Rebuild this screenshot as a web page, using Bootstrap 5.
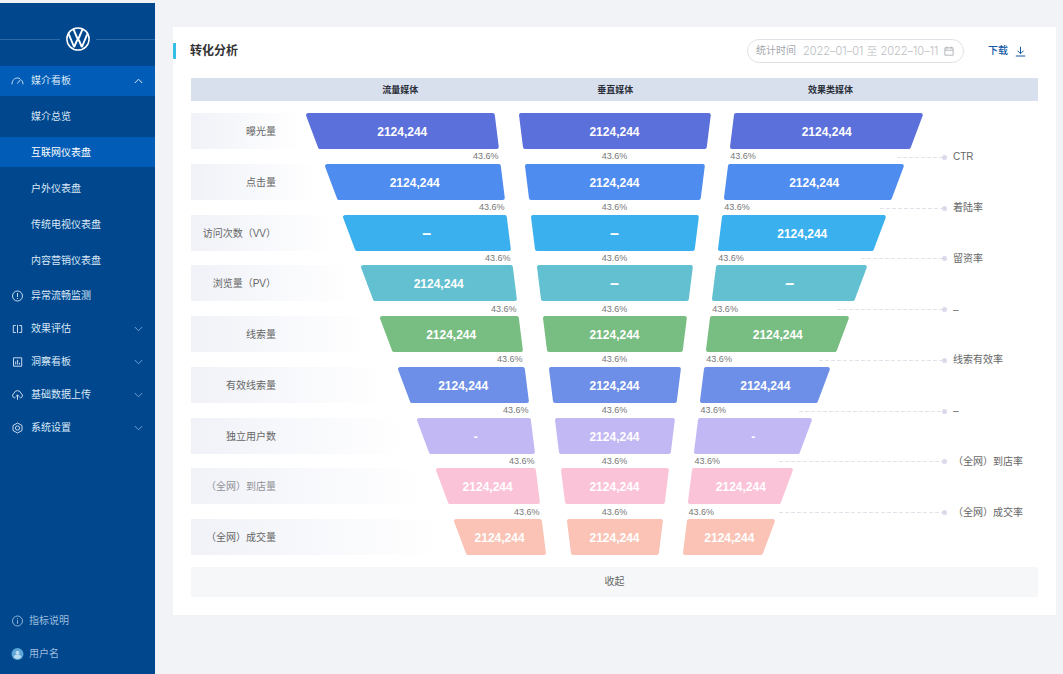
<!DOCTYPE html>
<html lang="zh-CN">
<head>
<meta charset="utf-8">
<meta name="viewport" content="width=device-width, initial-scale=1">
<title>转化分析</title>
<link href="https://cdn.jsdelivr.net/npm/bootstrap@5.3.0/dist/css/bootstrap.min.css" rel="stylesheet">
<style>
  body { font-family: "Liberation Sans", "Noto Sans CJK SC", sans-serif; font-size: 10px; line-height: 14px; background: #f1f3f6; color: #666; }
  svg { display: block; flex: none; }
  .app { min-height: 100vh; padding-top: 3px; }

  /* sidebar */
  .side { width: 155px; flex: none; background: #00478e; color: #dbe9f7; }
  .brand { height: 63px; padding-top: 9px; gap: 6px; }
  .brand i { flex: 1; height: 1px; background: #2c68a6; }
  .item { height: 33px; padding: 0 12px 0 11px; gap: 7px; color: inherit; background: none; border: 0; text-decoration: none; text-align: left; width: 100%; }
  .item.open { height: 30px; background: #005cb6; }
  .item span { flex: 1; }
  .item .chev { color: #6f9fd0; }
  .item.open .chev { color: #dbe9f7; }
  .subnav { padding: 2px 0 1px; }
  .subnav a { display: block; margin: 3px 0; padding: 9px 0 7px 31px; color: inherit; text-decoration: none; }
  .subnav li { display: flow-root; }
  .subnav a.active { background: #005cb6; color: #fff; }
  .foot { color: #9dbddd; padding-bottom: 4px; }
  .foot .item { gap: 5px; }

  /* panel */
  .page { padding: 24px 7px 24px 18px; }
  .panel { background: #fff; padding: 12px 18px 18px; }
  .headline { margin: 0 0 15px -18px; }
  .headline h1 { font-size: 12px; line-height: 16px; font-weight: 700; color: #333; margin: 0; padding-left: 14px; border-left: 3px solid #35bfe6; border-radius: 1px; }
  .range { width: 217px; height: 24px; border: 1px solid #dfe3e8; border-radius: 12px; padding: 0 9px 0 8px; color: #a3a6ab; }
  .range label { flex: none; margin-right: 7px; }
  .range input { flex: 1; min-width: 0; border: 0; padding: 0; background: none; color: #b9bcc1; font: 300 11px/14px Inter, "Noto Sans CJK SC", sans-serif; outline: 0; }
  .download { border: 0; background: none; padding: 0; gap: 7px; color: #1459a4; font-weight: 500; margin: 0 12px 0 24px; }
  .media { background: #d8dfed; height: 23px; font-size: 9px; font-weight: 700; color: #2b2f3a; margin-bottom: 12px; }
  .media .edge { width: 12%; }
  .media .chan { width: 25.4%; text-align: center; }

  /* funnel */
  .funnel { height: 442px; }
  .step { height: 36px; flex: none; }
  .step-name { background: linear-gradient(90deg, #f0f2f8, #fff 95%); flex: none; padding-top: 2px; }
  .step-name span { display: block; width: 85px; text-align: right; white-space: nowrap; }
  .muted .step-name { color: #8f9196; }
  .slab { position: relative; flex: none; }
  .slab svg { width: 100%; height: 36px; overflow: visible; }
  .slab b { position: absolute; inset: 2px 0 0; display: flex; align-items: center; justify-content: center; color: #fff; font-size: 12px; }
  .slab b.dash { font-size: 16px; }
  .rates { flex: 1 1 0; min-height: 0; font-size: 9px; line-height: 12px; color: #777; }
  .rates > div { flex: none; }
  .rates .legend-row { flex: 1; font-size: 10px; color: #666; padding-top: 2px; }
  .legend-row i { flex: 1; height: 1px; background: repeating-linear-gradient(90deg, #e1e3ea 0 4px, transparent 4px 6px); }
  .legend-row u { width: 5px; height: 5px; border-radius: 50%; background: #d9dbea; }
  .legend-row span { width: 91px; padding-left: 6px; white-space: nowrap; }
  .fold { display: block; width: 100%; height: 30px; border: 0; background: #f5f7f9; color: #666; margin-top: 12px; }
</style>
</head>
<body>
<div class="app d-flex">
  <nav class="side d-flex flex-column" aria-label="主导航">
    <div class="brand d-flex align-items-center">
      <i></i>
      <svg width="24" height="24" viewBox="0 0 24 24" fill="none" stroke="#fff" stroke-width="1.9" stroke-linejoin="bevel"><circle cx="12" cy="12" r="11.1" stroke-width="1.5"/><path d="M7.4 2.200 11.200 11h1.600l3.800-8.800"/><path d="M2.600 6.800 8.100 20l3.100-7h1.600l3.100 7 5.500-13.200"/></svg>
      <i></i>
    </div>
    <button class="item open d-flex align-items-center" type="button" aria-expanded="true">
      <svg width="13" height="12" viewBox="0 0 13 12" fill="none" stroke="currentColor" stroke-width=".9"><path d="M1 9.300C1 5.500 3.400 3 6.500 3c1 0 1.900.3 2.600.7M10.600 5.200c.9 1 1.400 2.400 1.400 4.100M6.300 8.600 9.800 4.300"/></svg>
      <span>媒介看板</span>
      <svg class="chev" width="9" height="6" viewBox="0 0 9 6" fill="none" stroke="currentColor"><path d="M.8 5 4.500 1.200 8.200 5"/></svg>
    </button>
    <ul class="subnav list-unstyled mb-0">
      <li><a href="#">媒介总览</a></li>
      <li><a href="#" class="active" aria-current="page">互联网仪表盘</a></li>
      <li><a href="#">户外仪表盘</a></li>
      <li><a href="#">传统电视仪表盘</a></li>
      <li><a href="#">内容营销仪表盘</a></li>
    </ul>
    <a class="item d-flex align-items-center" href="#">
      <svg width="13" height="12" viewBox="0 0 13 12" fill="none" stroke="currentColor" stroke-width=".9"><circle cx="6.500" cy="6" r="5"/><path d="M6.500 3v4M6.500 8v1"/></svg>
      <span>异常流畅监测</span>
    </a>
    <button class="item d-flex align-items-center" type="button" aria-expanded="false">
      <svg width="13" height="12" viewBox="0 0 13 12" fill="none" stroke="currentColor" stroke-width=".9"><path d="M4.800 2.500H2.300v7h2.500M8.200 2.500h2.500v7H8.200M6.500 1.800v8.400"/></svg>
      <span>效果评估</span>
      <svg class="chev" width="9" height="6" viewBox="0 0 9 6" fill="none" stroke="currentColor"><path d="M.8 1 4.500 4.800 8.200 1"/></svg>
    </button>
    <button class="item d-flex align-items-center" type="button" aria-expanded="false">
      <svg width="13" height="12" viewBox="0 0 13 12" fill="none" stroke="currentColor" stroke-width=".9"><path d="M2.500 1.800h8.200v8.400h-8.200zM4.700 5.500v3M6.600 3.800v4.700M8.500 6.800v1.700"/></svg>
      <span>洞察看板</span>
      <svg class="chev" width="9" height="6" viewBox="0 0 9 6" fill="none" stroke="currentColor"><path d="M.8 1 4.500 4.800 8.200 1"/></svg>
    </button>
    <button class="item d-flex align-items-center" type="button" aria-expanded="false">
      <svg width="13" height="12" viewBox="0 0 13 12" fill="none" stroke="currentColor" stroke-width=".9"><path d="M4.300 8.800H3.500A2.300 2.300 0 0 1 3 4.400 3.600 3.600 0 0 1 10 4.400a2.300 2.300 0 0 1-.5 4.400h-.8M6.500 10.800V6M4.700 7.700 6.500 5.900l1.800 1.800"/></svg>
      <span>基础数据上传</span>
      <svg class="chev" width="9" height="6" viewBox="0 0 9 6" fill="none" stroke="currentColor"><path d="M.8 1 4.500 4.800 8.200 1"/></svg>
    </button>
    <button class="item d-flex align-items-center" type="button" aria-expanded="false">
      <svg width="13" height="12" viewBox="0 0 13 12" fill="none" stroke="currentColor" stroke-width=".9"><path d="M6.500 1 11 3.500v5L6.500 11 2 8.500v-5z" stroke-linejoin="round"/><circle cx="6.500" cy="6" r="2.100"/></svg>
      <span>系统设置</span>
      <svg class="chev" width="9" height="6" viewBox="0 0 9 6" fill="none" stroke="currentColor"><path d="M.8 1 4.500 4.800 8.200 1"/></svg>
    </button>
    <div class="foot mt-auto">
      <a class="item d-flex align-items-center" href="#">
        <svg width="13" height="12" viewBox="0 0 13 12" fill="none" stroke="currentColor" stroke-width=".9"><circle cx="6.500" cy="6" r="5"/><path d="M6.500 5.200v3.600M6.500 3.200v1"/></svg>
        <span>指标说明</span>
      </a>
      <a class="item d-flex align-items-center" href="#">
        <svg width="13" height="12" viewBox="0 0 13 12"><circle cx="6.500" cy="6" r="6" fill="#5ba5d6"/><circle cx="6.500" cy="4.700" r="2" fill="#b9dcf0"/><path d="M2.800 9.200a3.700 2.600 0 0 1 7.400 0 4.800 4.800 0 0 1-7.400 0z" fill="#b9dcf0"/></svg>
        <span>用户名</span>
      </a>
    </div>
  </nav>

  <main class="page flex-grow-1">
    <section class="panel">
      <header class="headline d-flex align-items-center">
        <h1 class="me-auto">转化分析</h1>
        <div class="range d-flex align-items-center">
          <label for="range">统计时间</label>
          <input id="range" type="text" value="2022–01–01 至 2022–10–11" readonly>
          <svg width="10" height="10" viewBox="0 0 10 10" fill="none" stroke="currentColor" stroke-width=".8"><path d="M.9 1.800h8.200v7.400H.9zM.9 4.200h8.200M3 .5v2.300M7 .5v2.300"/></svg>
        </div>
        <button class="download d-flex align-items-center" type="button">下载
          <svg width="11" height="11" viewBox="0 0 11 11" fill="none" stroke="currentColor"><path d="M5.500.8v6.700M2.500 4.700l3 3 3-3M.8 10h9.400"/></svg>
        </button>
      </header>
      <div class="media d-flex align-items-center">
        <div class="edge"></div>
        <div class="chan">流量媒体</div>
        <div class="chan">垂直媒体</div>
        <div class="chan">效果类媒体</div>
      </div>
      <div class="funnel d-flex flex-column" id="funnel"></div>
      <button class="fold" type="button">收起</button>
    </section>
  </main>
</div>

<script src="https://cdn.jsdelivr.net/npm/bootstrap@5.3.0/dist/js/bootstrap.bundle.min.js"></script>
<script>
  // Chart units: 848 across. Each step holds the left and right edges of its three slabs.
  const SPAN = 848;
  const N = '2124,244';
  const steps = [
    { name: '曝光量', color: '#5b70da', x: [115, 308, 328, 520, 540, 733], v: [N, N, N], rate: 'CTR', from: 707 },
    { name: '点击量', color: '#4e8cef', x: [134, 314, 334, 514, 534, 714], v: [N, N, N], rate: '着陆率', from: 690 },
    { name: '访问次数（VV）', color: '#3bb0ef', x: [152, 320, 340, 508, 528, 696], v: ['–', '–', N], rate: '留资率', from: 671 },
    { name: '浏览量（PV）', color: '#62c0d0', x: [170, 326, 346, 502, 522, 677], v: [N, '–', '–'], rate: '–', from: 647 },
    { name: '线索量', color: '#78bd82', x: [189, 332, 352, 496, 516, 659], v: [N, N, N], rate: '线索有效率', from: 629 },
    { name: '有效线索量', color: '#6d8fe7', x: [207, 338, 358, 490, 510, 640], v: [N, N, N], rate: '–', from: 609 },
    { name: '独立用户数', color: '#c2b8f3', x: [226, 344, 364, 484, 504, 622], v: ['-', N, '-'], rate: '（全网）到店率', from: 589 },
    { name: '（全网）到店量', color: '#fbc3d8', x: [245, 349, 370, 478, 498, 603], v: [N, N, N], rate: '（全网）成交率', from: 589, muted: true },
    { name: '（全网）成交量', color: '#fac3b5', x: [263, 355, 376, 472, 493, 585], v: [N, N, N] }
  ];
  // How far each slab's corners lean inwards: top-left, top-right, bottom-right, bottom-left.
  const lean = [[0, 4, 0, 12], [0, 0, 4, 4], [4, 0, 12, 0]];
  const pct = u => (u / SPAN * 100).toFixed(3) + '%';

  const slab = (s, k) => {
    const w = s.x[2 * k + 1] - s.x[2 * k], l = lean[k], v = s.v[k];
    const pts = `${l[0] + 2},2 ${w - l[1] - 2},2 ${w - l[2] - 2},34 ${l[3] + 2},34`;
    return `<div class="slab" style="width:${pct(w)}"><svg viewBox="0 0 ${w} 36" preserveAspectRatio="none"><polygon points="${pts}" fill="${s.color}" stroke="${s.color}" stroke-width="4" stroke-linejoin="round"/></svg><b${v === '–' ? ' class="dash"' : ''}>${v}</b></div>`;
  };
  const gap = u => `<div style="width:${pct(u)}"></div>`;

  document.getElementById('funnel').innerHTML = steps.map(s => {
    const x = s.x;
    let html = `<div class="step d-flex${s.muted ? ' muted' : ''}">
      <div class="step-name d-flex align-items-center" style="width:${pct(x[0])}"><span>${s.name}</span></div>
      ${slab(s, 0)}${gap(x[2] - x[1])}${slab(s, 1)}${gap(x[4] - x[3])}${slab(s, 2)}</div>`;
    if (s.rate) html += `<div class="rates d-flex align-items-center">
      <div class="text-end" style="width:${pct(x[1])}">43.6%</div>${gap(x[2] - x[1])}
      <div class="text-center" style="width:${pct(x[3] - x[2])}">43.6%</div>${gap(x[4] - x[3])}
      <div style="width:${pct(s.from - x[4])}">43.6%</div>
      <div class="legend-row d-flex align-items-center"><i></i><u></u><span>${s.rate}</span></div></div>`;
    return html;
  }).join('');
</script>
</body>
</html>
